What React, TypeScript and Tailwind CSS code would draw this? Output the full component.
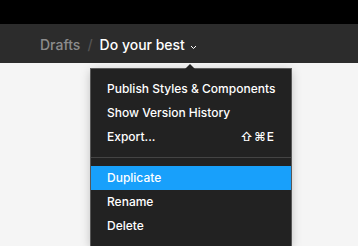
import React from "react";

const MenuItem: React.FC<{ label: string; shortcut?: string; active?: boolean }> = ({ label, shortcut, active }) => (
    <div
        className={`flex items-center justify-between h-6 pl-4 pr-4 text-[12px] font-medium whitespace-nowrap ${
            active ? "bg-[#18a0fb] text-white" : "text-white"
        }`}
    >
        <span>{label}</span>
        {shortcut && <span className="tracking-[1px]">{shortcut}</span>}
    </div>
);

const App: React.FC = () => {
    return (
        <div className="w-[358px] h-[246px] overflow-hidden bg-[#f5f5f5] font-['Inter',sans-serif]">
            <div className="h-6 bg-black" />
            <div className="h-[39px] bg-[#2c2c2c] flex items-center pl-10 pt-[2px] text-[14px] font-medium">
                <span className="text-[#8c8c8c]">Drafts</span>
                <span className="text-[#555] mx-[7px]">/</span>
                <span className="text-white">Do your best</span>
                <svg width="7" height="5" viewBox="0 0 7 5" className="ml-[5px] mt-[6px]">
                    <path d="M1 1 L3.5 3.5 L6 1" stroke="white" strokeWidth="1" fill="none" />
                </svg>
            </div>
            <div className="relative ml-[91px] mt-[6px] w-[200px]">
                <div className="absolute -top-[5px] left-[94px] w-0 h-0 border-l-[5px] border-r-[5px] border-b-[5px] border-l-transparent border-r-transparent border-b-[#222]" />
                <div className="bg-[#222] pt-2 pb-2 shadow-[0_2px_10px_rgba(0,0,0,0.25)] outline outline-1 outline-black/60">
                    <MenuItem label="Publish Styles & Components" />
                    <MenuItem label="Show Version History" />
                    <MenuItem label="Export..." shortcut="⇧⌘E" />
                    <div className="py-2">
                        <div className="h-px bg-[#444]" />
                    </div>
                    <MenuItem label="Duplicate" active />
                    <MenuItem label="Rename" />
                    <MenuItem label="Delete" />
                </div>
            </div>
        </div>
    );
};

export default App;
